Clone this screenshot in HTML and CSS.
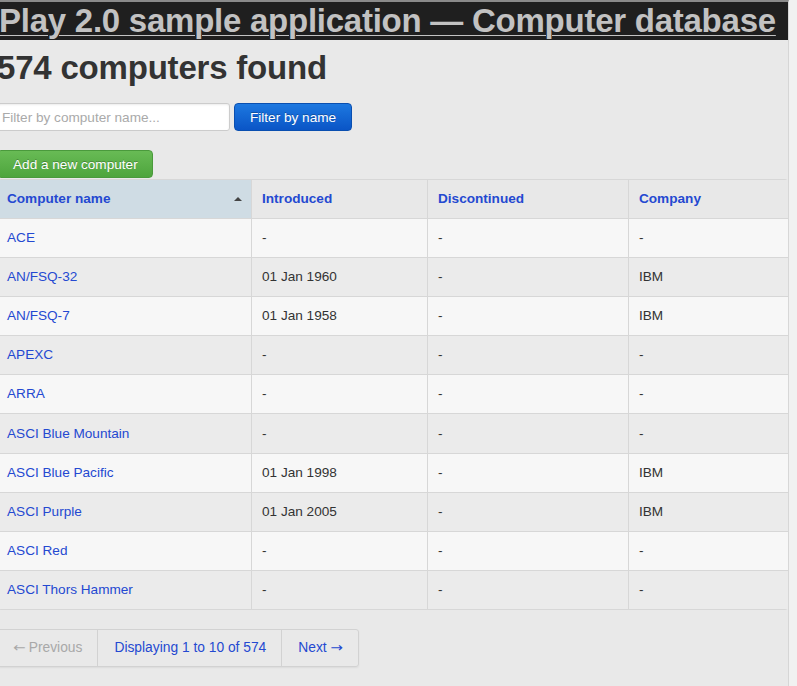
FILE: index.html
```html
<!DOCTYPE html>
<html>
<head>
<meta charset="utf-8">
<link rel="stylesheet" href="styles.css">
</head>
<body>
<div class="page">
  <header class="topbar">
    <a class="brand" href="#">Play 2.0 sample application — Computer database</a>
  </header>
  <section class="main">
    <h1 class="count">574 computers found</h1>
    <form class="filter">
      <input class="search" type="search" placeholder="Filter by computer name...">
      <button class="btn primary" type="button">Filter by name</button>
    </form>
    <a class="btn success" href="#">Add a new computer</a>
    <table class="computers">
      <thead>
        <tr>
          <th class="c1 sorted"><a href="#">Computer name</a><span class="arrow"></span></th>
          <th class="c2"><a href="#">Introduced</a></th>
          <th class="c3"><a href="#">Discontinued</a></th>
          <th class="c4"><a href="#">Company</a></th>
        </tr>
      </thead>
      <tbody>
        <tr><td><a href="#">ACE</a></td><td>-</td><td>-</td><td>-</td></tr>
        <tr><td><a href="#">AN/FSQ-32</a></td><td>01 Jan 1960</td><td>-</td><td>IBM</td></tr>
        <tr><td><a href="#">AN/FSQ-7</a></td><td>01 Jan 1958</td><td>-</td><td>IBM</td></tr>
        <tr><td><a href="#">APEXC</a></td><td>-</td><td>-</td><td>-</td></tr>
        <tr><td><a href="#">ARRA</a></td><td>-</td><td>-</td><td>-</td></tr>
        <tr><td><a href="#">ASCI Blue Mountain</a></td><td>-</td><td>-</td><td>-</td></tr>
        <tr><td><a href="#">ASCI Blue Pacific</a></td><td>01 Jan 1998</td><td>-</td><td>IBM</td></tr>
        <tr><td><a href="#">ASCI Purple</a></td><td>01 Jan 2005</td><td>-</td><td>IBM</td></tr>
        <tr><td><a href="#">ASCI Red</a></td><td>-</td><td>-</td><td>-</td></tr>
        <tr><td><a href="#">ASCI Thors Hammer</a></td><td>-</td><td>-</td><td>-</td></tr>
      </tbody>
    </table>
    <nav class="pagination">
      <span class="seg prev disabled"><span class="arr">←</span> Previous</span>
      <a class="seg current" href="#">Displaying 1 to 10 of 574</a>
      <a class="seg next" href="#">Next <span class="arr">→</span></a>
    </nav>
  </section>
</div>
</body>
</html>
```

FILE: styles.css
```css
html, body {
  margin: 0;
  padding: 0;
}
body {
  background: #f1f1f1;
  font-family: "Liberation Sans", Arial, sans-serif;
  font-size: 13.6px;
  line-height: 18px;
  color: #404040;
  overflow: hidden;
}
.page {
  width: 788px;
  min-height: 686px;
  background: #e9e9e9;
  border-right: 1px solid #d6d6d6;
  border-top: 2px solid #8a8a8a;
}
.topbar {
  height: 38px;
  background: #1f1f1f;
  overflow: hidden;
  white-space: nowrap;
}
.brand {
  display: inline-block;
  margin-left: -1px;
  font-size: 33px;
  line-height: 38px;
  font-weight: bold;
  color: #c2c2c2;
  text-decoration: underline;
  text-decoration-thickness: 1px;
  text-underline-offset: 3px;
  letter-spacing: -0.25px;
}
.main {
  margin-left: -3px;
}
.count {
  margin: 0;
  padding-top: 7px;
  height: 41px;
  font-size: 33px;
  line-height: 41px;
  font-weight: bold;
  color: #333;
  letter-spacing: -0.2px;
}
.filter {
  display: flex;
  gap: 4px;
  margin: 15px 0 0 0;
  height: 28px;
}
.search {
  box-sizing: border-box;
  width: 233px;
  height: 28px;
  margin: 0;
  padding: 4px 4px;
  border: 1px solid #cccccc;
  border-radius: 3px;
  background: #fff;
  font-family: "Liberation Sans", Arial, sans-serif;
  font-size: 13.6px;
  color: #808080;
  box-shadow: inset 0 1px 2px rgba(0,0,0,0.08);
}
.search::placeholder {
  color: #aaaaaa;
}
.btn {
  box-sizing: border-box;
  display: inline-block;
  height: 28px;
  padding: 0 15px;
  border-radius: 4px;
  font-family: "Liberation Sans", Arial, sans-serif;
  font-size: 13.6px;
  line-height: 27px;
  color: #fff;
  text-decoration: none;
  text-shadow: 0 -1px 0 rgba(0,0,0,0.25);
  cursor: pointer;
}
.primary {
  border: 1px solid #0a4fb0;
  background: linear-gradient(#1d78e0, #0a55c6);
}
.success {
  margin-top: 19px;
  padding: 0 14px 0 15px;
  border: 1px solid #4a9a3c;
  background: linear-gradient(#68bb55, #4ea53d);
}
.computers {
  width: 792px;
  margin-top: 1px;
  border-collapse: separate;
  border-spacing: 0;
  border: 1px solid #d7d7d7;
  border-radius: 4px;
}
.computers th,
.computers td {
  height: 38.1px;
  padding: 0 10px;
  text-align: left;
  vertical-align: middle;
  border-left: 1px solid #d7d7d7;
  border-top: 1px solid #d7d7d7;
}
.computers th {
  height: 38px;
}
.computers th:first-child,
.computers td:first-child {
  border-left: 0;
  padding-left: 9px;
}
.computers thead th {
  border-top: 0;
  font-weight: bold;
  background: #e8e8e8;
}
.computers th.sorted {
  background: #cfdce4;
  position: relative;
}
.c1 { width: 234px; }
.c2 { width: 155px; }
.c3 { width: 180px; }
.arrow {
  position: absolute;
  right: 9px;
  top: 17px;
  width: 0;
  height: 0;
  border-left: 4px solid transparent;
  border-right: 4px solid transparent;
  border-bottom: 4px solid #444;
}
.computers a {
  color: #2449d1;
  text-decoration: none;
}
.computers tbody tr:nth-child(odd) td {
  background: #f7f7f7;
}
.computers tbody tr:nth-child(even) td {
  background: #ebebeb;
}
.computers td {
  color: #333;
}
.pagination {
  display: inline-flex;
  margin-top: 19px;
  height: 36px;
  border: 1px solid #d2d2d2;
  border-radius: 3px;
  box-shadow: 0 1px 2px rgba(0,0,0,0.06);
  font-size: 13.8px;
}
.seg {
  display: block;
  padding: 0 15px 0 16px;
  line-height: 36px;
  color: #2449d1;
  text-decoration: none;
  border-left: 1px solid #d2d2d2;
}
.seg:first-child {
  border-left: 0;
}
.next {
  padding-right: 17px;
}
.arr {
  display: inline-block;
  font-family: "DejaVu Sans", sans-serif;
  font-size: 13px;
  transform: scaleX(1.15);
}
.disabled {
  color: #a8a8a8;
}
```
